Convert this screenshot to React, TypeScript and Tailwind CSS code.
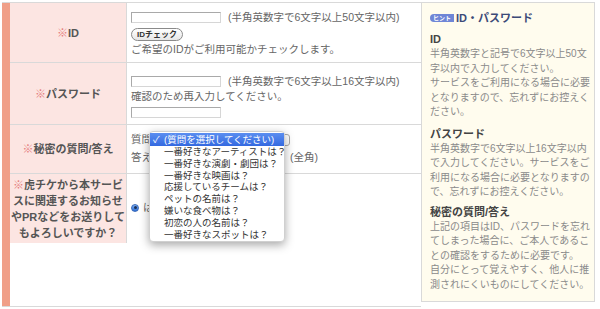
import React from 'react'

const questions = [
  '一番好きなアーティストは？',
  '一番好きな演劇・劇団は？',
  '一番好きな映画は？',
  '応援しているチームは？',
  'ペットの名前は？',
  '嫌いな食べ物は？',
  '初恋の人の名前は？',
  '一番好きなスポットは？',
]

function Label({ children }: { children: React.ReactNode }) {
  return (
    <div className="w-[117px] shrink-0 bg-[#fce5e2] border-r border-[#d9d9d9] flex items-center justify-center text-center text-[11px] font-bold leading-[16px] text-[#555] whitespace-nowrap">
      {children}
    </div>
  )
}

const Mark = () => <span className="text-[#e57d7d]">※</span>

function TextBox({ w = 'w-[90px]' }: { w?: string }) {
  return <div className={`${w} h-[11px] bg-white border border-[#a9a9a9] border-b-[#d6d6d6] border-r-[#d6d6d6]`} />
}

export default function App() {
  return (
    <div className="w-[600px] h-[309px] bg-white pt-[2px] pl-[2px] font-['Liberation_Sans','Noto_Sans_CJK_JP',sans-serif] overflow-hidden">
      <div className="flex items-start">
        {/* form table */}
        <div className="flex h-[305px] w-[419px] border-t border-b border-[#d9d9d9]">
          <div className="w-[8px] shrink-0 bg-[#f09f88]" />
          <div className="flex flex-col w-[411px] text-[10.5px] text-[#666]">
            <div className="flex h-[60px] border-b border-[#d9d9d9]">
              <Label><span><Mark />ID</span></Label>
              <div className="flex-1 pl-[4px] pt-[9px]">
                <div className="flex items-center gap-[7px] h-[11px]">
                  <TextBox />
                  <span className="leading-[11px]">(半角英数字で6文字以上50文字以内)</span>
                </div>
                <button className="mt-[5px] h-[13px] w-[52px] rounded-full border border-[#8a8a8a] bg-gradient-to-b from-white to-[#e6e6e6] text-[8px] font-bold text-[#333] leading-[11px] flex items-center justify-center">
                  IDチェック
                </button>
                <p className="leading-[14px] mt-[1px]">ご希望のIDがご利用可能かチェックします。</p>
              </div>
            </div>
            <div className="flex h-[62px] border-b border-[#d9d9d9]">
              <Label><span><Mark />パスワード</span></Label>
              <div className="flex-1 pl-[4px] pt-[13px]">
                <div className="flex items-center gap-[7px] h-[11px]">
                  <TextBox />
                  <span className="leading-[11px]">(半角英数字で6文字以上16文字以内)</span>
                </div>
                <p className="leading-[14px] mt-[2px]">確認のため再入力してください。</p>
                <div className="mt-[4px]"><TextBox /></div>
              </div>
            </div>
            <div className="flex h-[49px] border-b border-[#d9d9d9]">
              <Label><span><Mark />秘密の質問/答え</span></Label>
              <div className="relative flex-1 pl-[4px] pt-[8px]">
                <div className="flex items-center h-[14px] gap-[2px]">
                  <span>質問</span>
                  <div className="w-[136px] h-[12px] rounded-[3px] border border-[#aaa] bg-white" />
                </div>
                <div className="flex items-center h-[14px] mt-[4px] gap-[2px]">
                  <span>答え</span>
                  <TextBox w="w-[124px]" />
                  <span className="ml-[10px]">(全角)</span>
                </div>
                {/* open select menu */}
                <div className="absolute left-[22px] top-[6px] w-[136px] h-[111px] bg-white rounded-[4px] shadow-[0_3px_10px_rgba(0,0,0,0.35)] border border-[#d0d0d0] py-[1px] z-10 text-[9.5px] text-[#333] leading-[11.8px]">
                  <div className="flex h-[13px] items-center bg-gradient-to-b from-[#5b8ef0] to-[#3469e0] text-white">
                    <span className="w-[14px] pl-[3px]">✓</span>
                    <span>(質問を選択してください)</span>
                  </div>
                  {questions.map(q => (
                    <div key={q} className="pl-[14px] whitespace-nowrap">{q}</div>
                  ))}
                </div>
              </div>
            </div>
            <div className="flex h-[69px]">
              <Label>
                <span>
                  <Mark />虎チケから本サービ<br />スに関連するお知らせ<br />やPRなどをお送りして<br />もよろしいですか？
                </span>
              </Label>
              <div className="flex-1 pl-[4px] pb-[2px] flex items-center gap-[4px]">
                <span className="w-[8px] h-[8px] rounded-full bg-gradient-to-b from-[#7db0f5] to-[#2d6fd6] border border-[#3b6ab8] flex items-center justify-center">
                  <span className="w-[3px] h-[3px] rounded-full bg-[#1b2f55]" />
                </span>
                <span>はい</span>
              </div>
            </div>
          </div>
        </div>

        {/* hint panel */}
        <div className="w-[174px] h-[300px] bg-[#fffcee] border border-[#d9d9d9] pl-[8px] pt-[8px] text-[10px] leading-[14.5px] text-[#8a8a8a] whitespace-nowrap">
          <div className="flex items-center gap-[2px] h-[14px]">
            <span className="h-[8px] px-[3px] rounded-l-full bg-[#6f86d6] text-white text-[6px] leading-[8px] font-bold">ヒント</span>
            <span className="text-[11px] font-bold text-[#3c4a78]">ID・パスワード</span>
          </div>
          <h3 className="mt-[7px] text-[11px] font-bold text-[#444] leading-[15px]">ID</h3>
          <p>
            半角英数字と記号で6文字以上50文<br />字以内で入力してください。<br />
            サービスをご利用になる場合に必要<br />となりますので、忘れずにお控えく<br />ださい。
          </p>
          <h3 className="mt-[7px] text-[11px] font-bold text-[#444] leading-[15px]">パスワード</h3>
          <p>
            半角英数字で6文字以上16文字以内<br />で入力してください。サービスをご<br />利用になる場合に必要となりますの<br />で、忘れずにお控えください。
          </p>
          <h3 className="mt-[5px] text-[11px] font-bold text-[#444] leading-[15px]">秘密の質問/答え</h3>
          <p>
            上記の項目はID、パスワードを忘れ<br />てしまった場合に、ご本人であるこ<br />との確認をするために必要です。<br />
            自分にとって覚えやすく、他人に推<br />測されにくいものにしてください。
          </p>
        </div>
      </div>
    </div>
  )
}
